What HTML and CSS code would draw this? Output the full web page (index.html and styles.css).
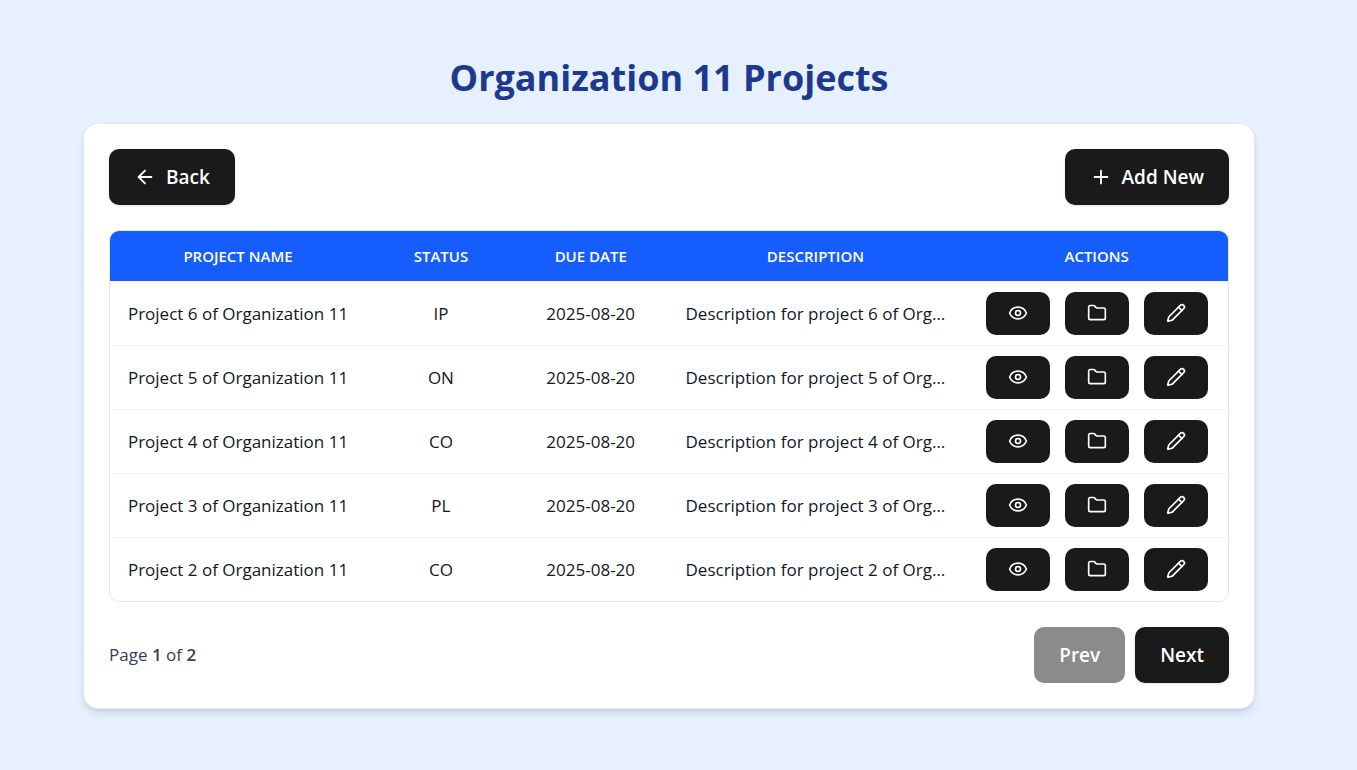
FILE: index.html
```html
<!DOCTYPE html>
<html lang="en">
<head>
<meta charset="utf-8">
<meta name="viewport" content="width=device-width, initial-scale=1">
<title>Organization 11 Projects</title>
<link rel="stylesheet" href="styles.css">
</head>
<body>
<svg class="sprite" aria-hidden="true">
  <symbol id="eye" viewBox="0 0 24 24"><path d="M2.06 12.35a1 1 0 0 1 0-.7 10.75 10.75 0 0 1 19.88 0 1 1 0 0 1 0 .7 10.75 10.75 0 0 1-19.88 0"/><circle cx="12" cy="12" r="3"/></symbol>
  <symbol id="folder" viewBox="0 0 24 24"><path d="M20 20a2 2 0 0 0 2-2V8a2 2 0 0 0-2-2h-7.9a2 2 0 0 1-1.69-.9L9.6 3.9A2 2 0 0 0 7.93 3H4a2 2 0 0 0-2 2v13a2 2 0 0 0 2 2Z"/></symbol>
  <symbol id="pencil" viewBox="0 0 24 24"><path d="M21.17 6.81a1 1 0 0 0-3.98-3.98L3.84 16.17a2 2 0 0 0-.5.83l-1.32 4.35a.5.5 0 0 0 .62.62l4.35-1.32a2 2 0 0 0 .83-.5z"/><path d="m15 5 4 4"/></symbol>
</svg>
<main class="page">
  <h1 class="title">Organization 11 Projects</h1>
  <section class="card">
    <div class="bar">
      <button class="btn" type="button"><svg class="icon icon-lg" viewBox="0 0 24 24" aria-hidden="true"><path d="m12 19-7-7 7-7M19 12H5"/></svg>Back</button>
      <button class="btn" type="button"><svg class="icon icon-lg" viewBox="0 0 24 24" aria-hidden="true"><path d="M5 12h14M12 5v14"/></svg>Add New</button>
    </div>
    <div class="table-wrap">
      <table class="table">
        <colgroup><col class="col-name"><col class="col-status"><col class="col-date"><col class="col-desc"><col class="col-actions"></colgroup>
        <thead>
          <tr><th>PROJECT NAME</th><th>STATUS</th><th>DUE DATE</th><th>DESCRIPTION</th><th>ACTIONS</th></tr>
        </thead>
        <tbody>
          <tr><td>Project 6 of Organization 11</td><td>IP</td><td>2025-08-20</td><td>Description for project 6 of Org...</td><td class="cell-actions"><div class="actions"><button class="act" type="button" aria-label="View"><svg class="icon"><use href="#eye"/></svg></button><button class="act" type="button" aria-label="Open"><svg class="icon"><use href="#folder"/></svg></button><button class="act" type="button" aria-label="Edit"><svg class="icon"><use href="#pencil"/></svg></button></div></td></tr>
          <tr><td>Project 5 of Organization 11</td><td>ON</td><td>2025-08-20</td><td>Description for project 5 of Org...</td><td class="cell-actions"><div class="actions"><button class="act" type="button" aria-label="View"><svg class="icon"><use href="#eye"/></svg></button><button class="act" type="button" aria-label="Open"><svg class="icon"><use href="#folder"/></svg></button><button class="act" type="button" aria-label="Edit"><svg class="icon"><use href="#pencil"/></svg></button></div></td></tr>
          <tr><td>Project 4 of Organization 11</td><td>CO</td><td>2025-08-20</td><td>Description for project 4 of Org...</td><td class="cell-actions"><div class="actions"><button class="act" type="button" aria-label="View"><svg class="icon"><use href="#eye"/></svg></button><button class="act" type="button" aria-label="Open"><svg class="icon"><use href="#folder"/></svg></button><button class="act" type="button" aria-label="Edit"><svg class="icon"><use href="#pencil"/></svg></button></div></td></tr>
          <tr><td>Project 3 of Organization 11</td><td>PL</td><td>2025-08-20</td><td>Description for project 3 of Org...</td><td class="cell-actions"><div class="actions"><button class="act" type="button" aria-label="View"><svg class="icon"><use href="#eye"/></svg></button><button class="act" type="button" aria-label="Open"><svg class="icon"><use href="#folder"/></svg></button><button class="act" type="button" aria-label="Edit"><svg class="icon"><use href="#pencil"/></svg></button></div></td></tr>
          <tr><td>Project 2 of Organization 11</td><td>CO</td><td>2025-08-20</td><td>Description for project 2 of Org...</td><td class="cell-actions"><div class="actions"><button class="act" type="button" aria-label="View"><svg class="icon"><use href="#eye"/></svg></button><button class="act" type="button" aria-label="Open"><svg class="icon"><use href="#folder"/></svg></button><button class="act" type="button" aria-label="Edit"><svg class="icon"><use href="#pencil"/></svg></button></div></td></tr>
        </tbody>
      </table>
    </div>
    <div class="bar">
      <p class="count">Page <strong>1</strong> of <strong>2</strong></p>
      <div class="pager">
        <button class="btn" type="button" disabled>Prev</button>
        <button class="btn" type="button">Next</button>
      </div>
    </div>
  </section>
</main>
</body>
</html>
```
FILE: styles.css
```css
* {
  box-sizing: border-box;
}

body {
  margin: 0;
  background: #e6f0ff;
  color: #101828;
  font-family: "Segoe UI", "Open Sans", "Noto Sans", sans-serif;
  font-size: 17px;
  line-height: 24px;
}

.sprite {
  display: none;
}

.page {
  padding: 53px 102px 60px 83px;
}

.title {
  margin: 0 0 20px;
  color: #1c398e;
  font-size: 36px;
  line-height: 50px;
  font-weight: 700;
  text-align: center;
}

.card {
  display: flex;
  flex-direction: column;
  gap: 25px;
  padding: 25px;
  border: 1px solid #e5e7eb;
  border-radius: 15px;
  background: #fff;
  box-shadow: 0 5px 8px -1px rgb(0 0 0 / 10%), 0 2px 5px -2px rgb(0 0 0 / 10%);
}

.bar {
  display: flex;
  align-items: center;
  justify-content: space-between;
}

.btn {
  display: inline-flex;
  align-items: center;
  gap: 10px;
  height: 56px;
  padding: 0 25px;
  border: 0;
  border-radius: 10px;
  background: #1a1a1a;
  color: #fff;
  font: inherit;
  font-size: 19px;
  font-weight: 600;
  box-shadow: 0 1px 3px rgb(0 0 0 / 12%);
}

.btn:disabled {
  opacity: 0.5;
  box-shadow: none;
}

.icon {
  width: 20px;
  height: 20px;
  fill: none;
  stroke: #fff;
  stroke-width: 2;
  stroke-linecap: round;
  stroke-linejoin: round;
}

.icon-lg {
  width: 22px;
  height: 22px;
}

.table-wrap {
  overflow: hidden;
  border: 1px solid #e5e7eb;
  border-radius: 10px;
}

.table {
  width: 100%;
  table-layout: fixed;
  border-collapse: collapse;
}

.col-name {
  width: 22.9%;
}

.col-status,
.col-date {
  width: 13.4%;
}

.col-desc {
  width: 26.8%;
}

.table th {
  height: 50px;
  padding: 0;
  background: #155dfc;
  color: #fff;
  font-size: 15px;
  font-weight: 600;
}

.table td {
  height: 64px;
  padding: 2px 0 0;
  border-top: 1px solid #f3f4f6;
  text-align: center;
  white-space: nowrap;
}

.table .cell-actions {
  padding: 0;
}

.actions {
  display: flex;
  justify-content: center;
  gap: 15px;
}

.act {
  display: flex;
  align-items: center;
  justify-content: center;
  width: 64px;
  height: 43px;
  padding: 0;
  border: 0;
  border-radius: 10px;
  background: #1a1a1a;
}

.count {
  margin: 0;
  color: #364153;
}

.count strong {
  font-weight: 600;
}

.pager {
  display: flex;
  gap: 10px;
}
```
